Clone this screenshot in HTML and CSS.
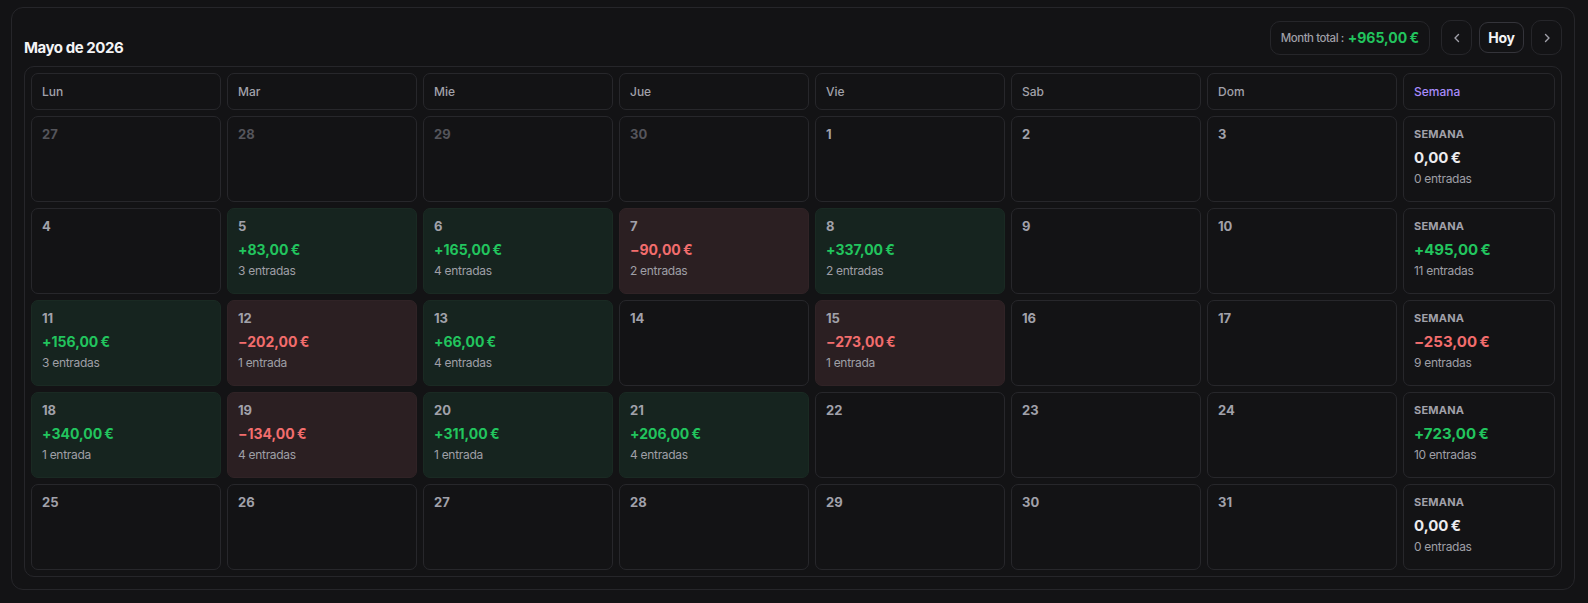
FILE: index.html
```html
<!DOCTYPE html>
<html lang="es">
<head>
<meta charset="utf-8">
<title>Calendario</title>
<link rel="stylesheet" href="styles.css">
</head>
<body>
<div class="page">
  <section class="card">
    <header class="top">
      <h1 class="title">Mayo de 2026</h1>
      <div class="controls">
        <div class="total-pill"><span class="total-label">Month total&nbsp;:</span><span class="total-value pos">+965,00&#8239;€</span></div>
        <button class="nav-btn" aria-label="Anterior"><svg width="12" height="12" viewBox="0 0 12 12"><polyline points="7.5,2.5 4,6 7.5,9.5" fill="none" stroke="#a1a1aa" stroke-width="1.4" stroke-linecap="round" stroke-linejoin="round"/></svg></button>
        <button class="today-btn">Hoy</button>
        <button class="nav-btn" aria-label="Siguiente"><svg width="12" height="12" viewBox="0 0 12 12"><polyline points="4.5,2.5 8,6 4.5,9.5" fill="none" stroke="#a1a1aa" stroke-width="1.4" stroke-linecap="round" stroke-linejoin="round"/></svg></button>
      </div>
    </header>
    <div class="grid-wrap">
      <div class="grid">
        <div class="head">Lun</div>
        <div class="head">Mar</div>
        <div class="head">Mie</div>
        <div class="head">Jue</div>
        <div class="head">Vie</div>
        <div class="head">Sab</div>
        <div class="head">Dom</div>
        <div class="head week-head">Semana</div>

        <div class="day out"><span class="num">27</span></div>
        <div class="day out"><span class="num">28</span></div>
        <div class="day out"><span class="num">29</span></div>
        <div class="day out"><span class="num">30</span></div>
        <div class="day"><span class="num">1</span></div>
        <div class="day"><span class="num">2</span></div>
        <div class="day"><span class="num">3</span></div>
        <div class="week"><span class="wlabel">SEMANA</span><span class="wamt">0,00&#8239;€</span><span class="cnt">0 entradas</span></div>

        <div class="day"><span class="num">4</span></div>
        <div class="day gain"><span class="num">5</span><span class="amt pos">+83,00&#8239;€</span><span class="cnt">3 entradas</span></div>
        <div class="day gain"><span class="num">6</span><span class="amt pos">+165,00&#8239;€</span><span class="cnt">4 entradas</span></div>
        <div class="day loss"><span class="num">7</span><span class="amt neg">−90,00&#8239;€</span><span class="cnt">2 entradas</span></div>
        <div class="day gain"><span class="num">8</span><span class="amt pos">+337,00&#8239;€</span><span class="cnt">2 entradas</span></div>
        <div class="day"><span class="num">9</span></div>
        <div class="day"><span class="num">10</span></div>
        <div class="week"><span class="wlabel">SEMANA</span><span class="wamt pos">+495,00&#8239;€</span><span class="cnt">11 entradas</span></div>

        <div class="day gain"><span class="num">11</span><span class="amt pos">+156,00&#8239;€</span><span class="cnt">3 entradas</span></div>
        <div class="day loss"><span class="num">12</span><span class="amt neg">−202,00&#8239;€</span><span class="cnt">1 entrada</span></div>
        <div class="day gain"><span class="num">13</span><span class="amt pos">+66,00&#8239;€</span><span class="cnt">4 entradas</span></div>
        <div class="day"><span class="num">14</span></div>
        <div class="day loss"><span class="num">15</span><span class="amt neg">−273,00&#8239;€</span><span class="cnt">1 entrada</span></div>
        <div class="day"><span class="num">16</span></div>
        <div class="day"><span class="num">17</span></div>
        <div class="week"><span class="wlabel">SEMANA</span><span class="wamt neg">−253,00&#8239;€</span><span class="cnt">9 entradas</span></div>

        <div class="day gain"><span class="num">18</span><span class="amt pos">+340,00&#8239;€</span><span class="cnt">1 entrada</span></div>
        <div class="day loss"><span class="num">19</span><span class="amt neg">−134,00&#8239;€</span><span class="cnt">4 entradas</span></div>
        <div class="day gain"><span class="num">20</span><span class="amt pos">+311,00&#8239;€</span><span class="cnt">1 entrada</span></div>
        <div class="day gain"><span class="num">21</span><span class="amt pos">+206,00&#8239;€</span><span class="cnt">4 entradas</span></div>
        <div class="day"><span class="num">22</span></div>
        <div class="day"><span class="num">23</span></div>
        <div class="day"><span class="num">24</span></div>
        <div class="week"><span class="wlabel">SEMANA</span><span class="wamt pos">+723,00&#8239;€</span><span class="cnt">10 entradas</span></div>

        <div class="day"><span class="num">25</span></div>
        <div class="day"><span class="num">26</span></div>
        <div class="day"><span class="num">27</span></div>
        <div class="day"><span class="num">28</span></div>
        <div class="day"><span class="num">29</span></div>
        <div class="day"><span class="num">30</span></div>
        <div class="day"><span class="num">31</span></div>
        <div class="week"><span class="wlabel">SEMANA</span><span class="wamt">0,00&#8239;€</span><span class="cnt">0 entradas</span></div>
      </div>
    </div>
  </section>
</div>
</body>
</html>
```

FILE: styles.css
```css
* { box-sizing: border-box; }

html, body {
  margin: 0;
  background: #131315;
  font-family: "Inter", "Noto Sans", sans-serif;
  color: #e4e4e7;
}

.page {
  padding: 7px 13px 13px 11px;
}

.card {
  border: 1px solid #26262a;
  border-radius: 12px;
  padding: 12px;
  background: #131315;
}

.top {
  display: flex;
  justify-content: space-between;
  align-items: flex-end;
  height: 35px;
  margin-bottom: 11px;
}

.title {
  margin: 0 0 -1px;
  font-size: 15px;
  line-height: 16px;
  font-weight: 700;
  letter-spacing: -0.45px;
  color: #f4f4f5;
}

.controls {
  display: flex;
  align-items: center;
  gap: 10px;
  height: 35px;
}

.total-pill {
  display: flex;
  align-items: center;
  gap: 4px;
  height: 34px;
  padding: 0 10px;
  border: 1px solid #26262a;
  border-radius: 10px;
  margin-right: 1px;
}

.total-label {
  font-size: 11.5px;
  font-weight: 500;
  color: #9f9fa6;
  letter-spacing: -0.45px;
}

.total-value {
  font-size: 14px;
  font-weight: 700;
  letter-spacing: -0.7px;
}

.nav-btn {
  width: 31px;
  height: 35px;
  border: 1px solid #26262a;
  border-radius: 10px;
  background: transparent;
  display: flex;
  align-items: center;
  justify-content: center;
  padding: 0;
  margin: 0;
}

.today-btn {
  height: 31px;
  width: 45px;
  border: 1px solid #34343a;
  border-radius: 9px;
  background: transparent;
  color: #f4f4f5;
  font-family: inherit;
  font-size: 14px;
  font-weight: 700;
  letter-spacing: -0.3px;
  padding: 0;
  margin: 0 -3px;
}

.grid-wrap {
  border: 1px solid #26262a;
  border-radius: 10px;
  padding: 6px;
}

.grid {
  display: grid;
  grid-template-columns: repeat(7, 1fr) 0.8fr;
  grid-template-rows: 37px repeat(5, 86px);
  gap: 6px;
}

.head {
  border: 1px solid #27272b;
  border-radius: 7px;
  display: flex;
  align-items: center;
  padding: 0 10px;
  font-size: 12px;
  font-weight: 500;
  color: #a1a1aa;
}

.week-head {
  color: #a78bfa;
}

.day, .week {
  border: 1px solid #27272b;
  border-radius: 7px;
  padding: 8px 10px;
  display: flex;
  flex-direction: column;
  align-items: flex-start;
}

.day.gain {
  background: #16241f;
  border-color: #1a2a23;
}

.day.loss {
  background: #2b1f22;
  border-color: #302326;
}

.num {
  font-size: 13px;
  line-height: 18px;
  font-weight: 700;
  color: #a1a1aa;
}

.day.out .num {
  color: #55555b;
}

.amt {
  margin-top: 5px;
  font-size: 14px;
  line-height: 20px;
  font-weight: 700;
  letter-spacing: -0.5px;
}

.cnt {
  margin-top: 2px;
  font-size: 12px;
  line-height: 18px;
  color: #9f9fa6;
  letter-spacing: -0.3px;
}

.wlabel {
  font-size: 11px;
  line-height: 18px;
  font-weight: 700;
  color: #a1a1aa;
  letter-spacing: 0.2px;
}

.wamt {
  margin-top: 5px;
  font-size: 15px;
  line-height: 20px;
  font-weight: 700;
  letter-spacing: -0.5px;
  color: #ececef;
}

.pos { color: #22c55e; }
.neg { color: #f26d6d; }
.wamt.pos { color: #22c55e; }
.wamt.neg { color: #f26d6d; }
```
